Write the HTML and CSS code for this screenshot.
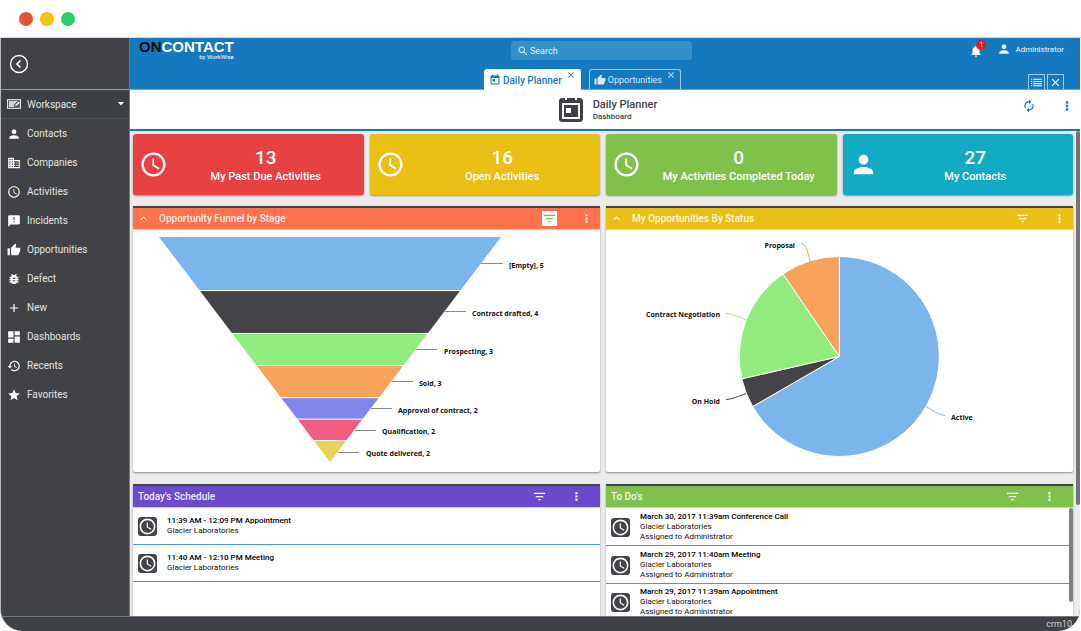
FILE: index.html
```html
<!DOCTYPE html>
<html lang="en">
<head>
<meta charset="utf-8">
<title>OnContact CRM - Daily Planner</title>
<link rel="stylesheet" href="styles.css">
</head>
<body>
<svg class="sprite" aria-hidden="true">
  <symbol id="person" viewBox="0 0 24 24"><path d="M12 12c2.210 0 4-1.790 4-4s-1.790-4-4-4-4 1.790-4 4 1.790 4 4 4zm0 2c-2.670 0-8 1.340-8 4v2h16v-2c0-2.660-5.330-4-8-4z"/></symbol>
  <symbol id="clock" viewBox="0 0 24 24"><path d="M11.990 2C6.470 2 2 6.480 2 12s4.470 10 9.990 10C17.520 22 22 17.520 22 12S17.520 2 11.990 2zM12 20c-4.420 0-8-3.580-8-8s3.580-8 8-8 8 3.580 8 8-3.580 8-8 8zm.5-13H11v6l5.250 3.150.75-1.230-4.500-2.670z"/></symbol>
  <symbol id="thumb" viewBox="0 0 24 24"><path d="M1 21h4V9H1v12zm22-11c0-1.100-.9-2-2-2h-6.310l.95-4.570.03-.32c0-.41-.17-.79-.44-1.060L14.170 1 7.590 7.590C7.220 7.950 7 8.450 7 9v10c0 1.100.9 2 2 2h9c.83 0 1.540-.5 1.840-1.220l3.020-7.050c.09-.23.14-.47.14-.73v-2z"/></symbol>
  <symbol id="event" viewBox="0 0 24 24"><path fill-rule="evenodd" d="M19 3h-1V1h-2v2H8V1H6v2H5c-1.100 0-2 .9-2 2v14c0 1.100.9 2 2 2h14c1.100 0 2-.9 2-2V5c0-1.100-.9-2-2-2zm0 16H5V8h14v11zM7 10h5v5H7z"/></symbol>
  <symbol id="filter" viewBox="0 0 24 24"><path d="M10 18h4v-2h-4v2zM3 6v2h18V6H3zm3 7h12v-2H6v2z"/></symbol>
  <symbol id="more" viewBox="0 0 24 24"><path d="M10 4h4v4h-4zM10 10h4v4h-4zM10 16h4v4h-4z"/></symbol>
  <symbol id="up" viewBox="0 0 24 24"><path d="M12 8l-6 6 1.410 1.410L12 10.830l4.590 4.580L18 14z"/></symbol>
  <symbol id="close" viewBox="0 0 24 24"><path d="M19 6.410L17.590 5 12 10.590 6.410 5 5 6.410 10.590 12 5 17.590 6.410 19 12 13.410 17.590 19 19 17.590 13.410 12z"/></symbol>
</svg>

<div class="titlebar"><span class="dot dot-red"></span><span class="dot dot-yellow"></span><span class="dot dot-green"></span></div>

<div class="app">
  <div class="shell">
    <nav class="sidebar" aria-label="Main">
      <div class="sidebar-top">
        <button class="back" aria-label="Collapse menu"><svg viewBox="0 0 20 20"><circle cx="10" cy="10" r="8.500" fill="none" stroke="#fff" stroke-width="1.400"/><path d="M11.500 6.500L8 10l3.500 3.500" fill="none" stroke="#fff" stroke-width="1.600"/></svg></button>
      </div>
      <button class="nav-item workspace">
        <svg class="icon" viewBox="0 0 24 24"><path fill-rule="evenodd" d="M0 4h24v16H0zM1.500 5.500v13h21v-13z"/><path fill="#d2d2d2" d="M3 7h18v10H3z"/><path fill="#45474b" d="M12 17l1-5 6-5h2v10z"/><path d="M14 16l1-3 5-5 2 2-5 5z"/></svg>
        <span>Workspace</span>
        <svg class="caret" viewBox="0 0 8 4"><path d="M1 0h6L4 3.500z"/></svg>
      </button>
      <a class="nav-item" href="#contacts"><svg class="icon"><use href="#person"/></svg><span>Contacts</span></a>
      <a class="nav-item" href="#companies"><svg class="icon" viewBox="0 0 24 24"><path d="M12 7V3H2v18h20V7H12zM6 19H4v-2h2v2zm0-4H4v-2h2v2zm0-4H4V9h2v2zm0-4H4V5h2v2zm4 12H8v-2h2v2zm0-4H8v-2h2v2zm0-4H8V9h2v2zm0-4H8V5h2v2zm10 12h-8v-2h2v-2h-2v-2h2v-2h-2V9h8v10zm-2-8h-2v2h2v-2zm0 4h-2v2h2v-2z"/></svg><span>Companies</span></a>
      <a class="nav-item" href="#activities"><svg class="icon"><use href="#clock"/></svg><span>Activities</span></a>
      <a class="nav-item" href="#incidents"><svg class="icon" viewBox="0 0 24 24"><path d="M20 2H4c-1.100 0-1.990.9-1.990 2L2 22l4-4h14c1.100 0 2-.9 2-2V4c0-1.100-.9-2-2-2zm-7 12h-2v-2h2v2zm0-4h-2V5h2v5z"/></svg><span>Incidents</span></a>
      <a class="nav-item" href="#opportunities"><svg class="icon"><use href="#thumb"/></svg><span>Opportunities</span></a>
      <a class="nav-item" href="#defect"><svg class="icon" viewBox="0 0 24 24"><path d="M20 8h-2.810c-.45-.78-1.070-1.450-1.820-1.960L17 4.410 15.590 3l-2.170 2.170C12.960 5.060 12.490 5 12 5s-.96.060-1.410.17L8.410 3 7 4.410l1.620 1.630C7.880 6.550 7.260 7.220 6.810 8H4v2h2.090c-.05.33-.09.66-.09 1v1H4v2h2v1c0 .34.04.67.09 1H4v2h2.810c1.040 1.790 2.970 3 5.190 3s4.150-1.210 5.190-3H20v-2h-2.090c.05-.33.09-.66.09-1v-1h2v-2h-2v-1c0-.34-.04-.67-.09-1H20V8zm-6 8h-4v-2h4v2zm0-4h-4v-2h4v2z"/></svg><span>Defect</span></a>
      <a class="nav-item" href="#new"><svg class="icon" viewBox="0 0 24 24"><path d="M19 13h-6v6h-2v-6H5v-2h6V5h2v6h6v2z"/></svg><span>New</span></a>
      <a class="nav-item" href="#dashboards"><svg class="icon" viewBox="0 0 24 24"><path d="M2 13h9V2H2v11zm0 9h9v-7H2v7zm11 0h9V11h-9v11zm0-20v7h9V2h-9z"/></svg><span>Dashboards</span></a>
      <a class="nav-item" href="#recents"><svg class="icon" viewBox="0 0 24 24"><path d="M13 3c-4.970 0-9 4.030-9 9H1l3.890 3.890.07.14L9 12H6c0-3.870 3.130-7 7-7s7 3.130 7 7-3.130 7-7 7c-1.930 0-3.680-.79-4.940-2.060l-1.420 1.420C8.270 19.990 10.510 21 13 21c4.970 0 9-4.030 9-9s-4.030-9-9-9zm-1 5v5l4.280 2.540.72-1.210-3.500-2.080V8H12z"/></svg><span>Recents</span></a>
      <a class="nav-item" href="#favorites"><svg class="icon" viewBox="0 0 24 24"><path d="M12 17.270L18.180 21l-1.640-7.030L22 9.240l-7.190-.61L12 2 9.190 8.630 2 9.240l5.460 4.730L5.820 21z"/></svg><span>Favorites</span></a>
    </nav>

    <div class="main">
      <header class="header">
        <div class="logo"><div class="logo-name"><span class="logo-on">ON</span>CONTACT</div><div class="logo-by">by WorkWise</div></div>
        <label class="search"><svg viewBox="0 0 24 24"><path d="M15.500 14h-.79l-.28-.27C15.410 12.590 16 11.110 16 9.500 16 5.910 13.090 3 9.500 3S3 5.910 3 9.500 5.910 16 9.500 16c1.610 0 3.090-.59 4.230-1.570l.27.28v.79l5 4.990L20.490 19l-4.990-5zm-6 0C7.010 14 5 11.990 5 9.500S7.010 5 9.500 5 14 7.010 14 9.500 11.990 14 9.500 14z"/></svg><input type="text" placeholder="Search" aria-label="Search"></label>
        <div class="user">
          <button class="bell" aria-label="Notifications"><svg viewBox="0 0 24 24"><path d="M12 22c1.100 0 2-.9 2-2h-4c0 1.100.9 2 2 2zm6-6v-5c0-3.070-1.640-5.640-4.500-6.320V4c0-.83-.67-1.500-1.500-1.500s-1.500.67-1.500 1.500v.68C7.630 5.360 6 7.920 6 11v5l-2 2v1h16v-1l-2-2z"/></svg><span class="badge">1</span></button>
          <button class="account"><svg><use href="#person"/></svg>Administrator</button>
        </div>
        <div class="tabs">
          <div class="tab tab-active"><svg class="tab-icon"><use href="#event"/></svg><a href="#planner">Daily Planner</a><button class="tab-close" aria-label="Close Daily Planner"><svg><use href="#close"/></svg></button></div>
          <div class="tab"><svg class="tab-icon"><use href="#thumb"/></svg><a href="#opps">Opportunities</a><button class="tab-close" aria-label="Close Opportunities"><svg><use href="#close"/></svg></button></div>
        </div>
        <div class="tab-tools">
          <button aria-label="List tabs"><svg viewBox="0 0 24 24"><path d="M2 5h2v2H2zM6 5h16v2H6zM2 9h2v2H2zM6 9h16v2H6zM2 13h2v2H2zM6 13h16v2H6zM2 17h2v2H2zM6 17h16v2H6z"/></svg></button>
          <button aria-label="Close all tabs"><svg><use href="#close"/></svg></button>
        </div>
      </header>

      <div class="pagebar">
        <div class="page-title">
          <svg viewBox="0 0 26 26"><path fill-rule="evenodd" d="M5 1h2v2h2V1h8v2h2V1h2c3 0 4 1 4 4v16c0 3-1 4-4 4H5c-3 0-4-1-4-4V5c0-3 1-4 4-4zM4 6v15c0 1 0 1 1 1h16c1 0 1 0 1-1V6zM6 8h14v12H6zM8 11v5h5v-5z"/></svg>
          <div><h1>Daily Planner</h1><p>Dashboard</p></div>
        </div>
        <div class="page-tools">
          <button aria-label="Refresh"><svg viewBox="0 0 24 24"><path d="M12 6v3l4-4-4-4v3c-4.420 0-8 3.580-8 8 0 1.570.46 3.030 1.240 4.260L6.700 14.800c-.45-.83-.7-1.790-.7-2.800 0-3.310 2.690-6 6-6zm6.760 1.740L17.300 9.200c.44.840.7 1.790.7 2.800 0 3.310-2.690 6-6 6v-3l-4 4 4 4v-3c4.420 0 8-3.580 8-8 0-1.570-.46-3.030-1.240-4.260z"/></svg></button>
          <button aria-label="More"><svg><use href="#more"/></svg></button>
        </div>
      </div>

      <main class="content">
        <div class="cards">
          <button class="card card-red"><svg><use href="#clock"/></svg><span class="card-text"><b>13</b>My Past Due Activities</span></button>
          <button class="card card-yellow"><svg><use href="#clock"/></svg><span class="card-text"><b>16</b>Open Activities</span></button>
          <button class="card card-green"><svg><use href="#clock"/></svg><span class="card-text"><b>0</b>My Activities Completed Today</span></button>
          <button class="card card-teal"><svg><use href="#person"/></svg><span class="card-text"><b>27</b>My Contacts</span></button>
        </div>

        <div class="panels">
          <section class="panel">
            <div class="panel-head head-orange">
              <button aria-label="Collapse"><svg><use href="#up"/></svg></button><h2>Opportunity Funnel by Stage</h2>
              <button class="filter filter-on" aria-label="Filter"><svg><use href="#filter"/></svg></button><button aria-label="More"><svg><use href="#more"/></svg></button>
            </div>
            <svg class="chart" viewBox="0 0 467 242" role="img" aria-label="Opportunity funnel by stage">
              <path fill="#7cb5ec" d="M26 7H368L327.300 60.600H66.700z"/>
              <path fill="#434348" d="M66.700 60.600H327.300L294.700 103.400H99.300z"/>
              <path fill="#90ed7d" d="M99.300 103.400H294.700L270.300 135.600H123.700z"/>
              <path fill="#f7a35c" d="M123.700 135.600H270.300L245.900 167.700H148.100z"/>
              <path fill="#8085e9" d="M148.100 167.700H245.900L229.600 189.100H164.400z"/>
              <path fill="#f15c80" d="M164.400 189.100H229.600L213.300 210.600H180.700z"/>
              <path fill="#e4d354" d="M180.700 210.600H213.300L197 232z"/>
              <path fill="none" stroke="#fff" stroke-width="1" d="M66 60.600H328M99 103.400H295M123 135.600H271M148 167.700H246M164 189.100H230M180 210.600H214"/>
              <path class="leader" d="M348 33.500h22M312 81.500h21M283 119.500h21M259 151.500h21M238 178.500h21M222 200.500h21M205 222.500h21"/>
              <text x="376" y="38">[Empty], 5</text>
              <text x="339" y="86">Contract drafted, 4</text>
              <text x="311" y="124">Prospecting, 3</text>
              <text x="286" y="156">Sold, 3</text>
              <text x="265" y="183">Approval of contract, 2</text>
              <text x="249" y="204">Qualification, 2</text>
              <text x="233" y="226">Quote delivered, 2</text>
            </svg>
          </section>

          <section class="panel">
            <div class="panel-head head-yellow">
              <button aria-label="Collapse"><svg><use href="#up"/></svg></button><h2>My Opportunities By Status</h2>
              <button class="filter" aria-label="Filter"><svg><use href="#filter"/></svg></button><button aria-label="More"><svg><use href="#more"/></svg></button>
            </div>
            <svg class="chart" viewBox="0 0 467 242" role="img" aria-label="Opportunities by status">
              <g stroke="#fff" stroke-width="1" stroke-linejoin="round">
                <path fill="#7cb5ec" d="M233.300 126.500V26.500A100 100 0 1 1 146.700 176.500z"/>
                <path fill="#434348" d="M233.300 126.500L146.700 176.500A100 100 0 0 1 135.800 148.800z"/>
                <path fill="#90ed7d" d="M233.300 126.500L135.800 148.800A100 100 0 0 1 177 43.900z"/>
                <path fill="#f7a35c" d="M233.300 126.500L177 43.900A100 100 0 0 1 233.300 26.500z"/>
              </g>
              <g fill="none" stroke-width="1">
                <path stroke="#7cb5ec" d="M339 185.500C334 185.500 326 180 320 176.500"/>
                <path stroke="#434348" d="M120 169.500C125 169.500 134 166 140 163.500"/>
                <path stroke="#90ed7d" d="M120 83.500C125 83.500 134 87 140.500 90"/>
                <path stroke="#f7a35c" d="M195 13.500C200 13.500 201 20 204 30.500"/>
              </g>
              <text x="345" y="190">Active</text>
              <text x="114" y="174" text-anchor="end">On Hold</text>
              <text x="114" y="87" text-anchor="end">Contract Negotiation</text>
              <text x="189" y="18" text-anchor="end">Proposal</text>
            </svg>
          </section>

          <section class="panel">
            <div class="panel-head head-purple">
              <h2>Today's Schedule</h2>
              <button class="filter" aria-label="Filter"><svg><use href="#filter"/></svg></button><button aria-label="More"><svg><use href="#more"/></svg></button>
            </div>
            <ul class="list schedule">
              <li><span class="tile"><svg><use href="#clock"/></svg></span><div><strong>11:39 AM - 12:09 PM Appointment</strong><p>Glacier Laboratories</p></div></li>
              <li><span class="tile"><svg><use href="#clock"/></svg></span><div><strong>11:40 AM - 12:10 PM Meeting</strong><p>Glacier Laboratories</p></div></li>
            </ul>
          </section>

          <section class="panel">
            <div class="panel-head head-green">
              <h2>To Do's</h2>
              <button class="filter" aria-label="Filter"><svg><use href="#filter"/></svg></button><button aria-label="More"><svg><use href="#more"/></svg></button>
            </div>
            <div class="todo-body">
              <ul class="list todo">
                <li><span class="tile"><svg><use href="#clock"/></svg></span><div><strong>March 30, 2017 11:39am Conference Call</strong><p>Glacier Laboratories</p><p>Assigned to Administrator</p></div></li>
                <li><span class="tile"><svg><use href="#clock"/></svg></span><div><strong>March 29, 2017 11:40am Meeting</strong><p>Glacier Laboratories</p><p>Assigned to Administrator</p></div></li>
                <li><span class="tile"><svg><use href="#clock"/></svg></span><div><strong>March 29, 2017 11:39am Appointment</strong><p>Glacier Laboratories</p><p>Assigned to Administrator</p></div></li>
              </ul>
              <span class="thumb thumb-list"></span>
            </div>
          </section>
        </div>
        <span class="thumb thumb-page"></span>
      </main>
    </div>
  </div>
  <footer class="footer">crm10</footer>
</div>
</body>
</html>
```
FILE: styles.css
```css
* { box-sizing: border-box; }
body {
  margin: 0;
  height: 100vh;
  display: flex;
  flex-direction: column;
  overflow: hidden;
  background: #fff;
  font-family: Roboto, "Liberation Sans", sans-serif;
  font-size: 9px;
}
h1, h2, p, ul { margin: 0; padding: 0; }
button { margin: 0; padding: 0; border: 0; background: none; color: inherit; font: inherit; cursor: pointer; }
a { color: inherit; text-decoration: none; }
svg { display: block; fill: currentColor; flex: none; }
.sprite { position: absolute; width: 0; height: 0; }

.titlebar { flex: none; height: 38px; display: flex; align-items: center; gap: 7px; padding-left: 19px; border-bottom: 1px solid #d5dce0; }
.dot { width: 14px; height: 14px; border-radius: 50%; }
.dot-red { background: #e94f3d; }
.dot-yellow { background: #f1c40f; }
.dot-green { background: #2ecc71; }

.app { flex: 1; min-height: 0; display: flex; flex-direction: column; margin-right: 1px; border-left: 1px solid #b5b7b9; border-radius: 0 0 22px 22px; overflow: hidden; background: #3e4145; }
.shell { flex: 1; min-height: 0; display: grid; grid-template-columns: 129px minmax(0, 1fr); }

.sidebar { background: #404246; color: #e4e4e4; border-right: 1px solid #77797c; font-size: 10px; }
.sidebar-top { height: 52px; display: flex; align-items: center; padding-left: 8px; border-bottom: 1px solid #9b9da0; }
.back svg { width: 20px; height: 20px; }
.nav-item { display: flex; align-items: center; width: 100%; height: 29px; padding-left: 6px; gap: 6px; text-align: left; }
.nav-item .icon { width: 14px; height: 14px; color: #fff; }
.workspace { background: #3c4045; border-bottom: 1px solid #515359; }
.caret { width: 8px; height: 4px; margin-left: auto; margin-right: 4px; color: #fff; }

.main { display: flex; flex-direction: column; min-width: 0; min-height: 0; }
.header { flex: none; height: 52px; display: grid; grid-template-columns: 1fr 181px 1fr; grid-template-rows: 22px 29px; padding: 0 16px 0 9px; background: #1579c0; color: #fff; border-bottom: 1px solid #6da9d6; }
.logo { justify-self: start; padding-top: 2px; }
.logo-name { font: 700 15px/14px "Liberation Sans", sans-serif; }
.logo-on { color: #000; }
.logo-by { font-size: 6px; line-height: 5px; text-align: right; }
.search { align-self: end; height: 19px; display: flex; align-items: center; gap: 1px; padding-left: 5px; border: 1px solid #4c88b1; border-radius: 3px; background: #3490cb; color: #e0effa; }
.search svg { width: 12px; height: 12px; }
.search input { flex: 1; min-width: 0; padding: 0; border: 0; outline: 0; background: none; color: inherit; font: inherit; }
.search input::placeholder { color: inherit; opacity: 1; }
.user { justify-self: end; display: flex; align-items: center; gap: 14px; }
.bell { position: relative; padding-top: 3px; }
.bell svg { width: 14px; height: 14px; }
.badge { position: absolute; left: 7px; top: -1px; width: 10px; height: 10px; border-radius: 50%; background: #e21b1b; font-size: 7px; line-height: 10px; text-align: center; }
.account { display: flex; align-items: center; gap: 4px; color: #f0f6fb; font-size: 8px; }
.account svg { width: 14px; height: 14px; }
.tabs { grid-column: 1 / 4; grid-row: 2; justify-self: center; align-self: end; display: flex; gap: 8px; margin-right: 38px; }
.tab { display: flex; align-items: center; height: 20px; padding: 0 4px; gap: 2px; border: 1px solid #9ccbec; border-bottom: 0; border-radius: 3px 3px 0 0; color: #d8eaf7; }
.tab-active { height: 21px; margin-bottom: -1px; background: #fff; border-color: #fff; color: #1579c0; font-size: 10px; font-weight: 500; }
.tab-icon { width: 12px; height: 12px; }
.tab a { margin-right: 2px; }
.tab-close { align-self: start; }
.tab-close svg { width: 10px; height: 10px; }
.tab-tools { grid-column: 3; grid-row: 2; justify-self: end; align-self: end; display: flex; gap: 2px; }
.tab-tools button { width: 17px; height: 15px; border: 1px solid #9ccbec; border-bottom: 0; display: grid; place-items: center; }
.tab-tools svg { width: 13px; height: 13px; }

.pagebar { flex: none; height: 41px; display: grid; grid-template-columns: 1fr auto 1fr; align-items: center; padding: 0 8px 0 13px; background: #fff; border-bottom: 2px solid #1579c0; }
.page-title { grid-column: 2; display: flex; align-items: center; gap: 9px; color: #404248; }
.page-title svg { width: 26px; height: 26px; }
.page-title h1 { font-size: 11px; line-height: 14px; font-weight: 500; }
.page-title p { font-size: 8px; line-height: 10px; font-weight: 500; }
.page-tools { justify-self: end; align-self: start; padding-top: 9px; display: flex; gap: 24px; color: #1579c0; }
.page-tools svg { width: 14px; height: 14px; }
.page-tools button:last-child { margin-right: -2px; }

.content { position: relative; flex: 1; min-height: 0; overflow: hidden; padding: 3px 7px 0 3px; background: #ebebeb; }
.cards { display: grid; grid-template-columns: repeat(4, minmax(0, 1fr)); gap: 6px; }
.card { display: flex; align-items: center; height: 61px; padding: 0 0 0 6px; border-radius: 3px; color: #fff; box-shadow: 0 1px 2px rgba(0, 0, 0, .4); }
.card svg { width: 29px; height: 29px; }
.card-text { flex: 1; padding-top: 1px; font-size: 11px; line-height: 15px; font-weight: 500; text-align: center; }
.card-text b { display: block; font-size: 19px; line-height: 22px; font-weight: 500; }
.card-red { background: #e84142; }
.card-yellow { background: #eac015; }
.card-green { background: #80c14b; }
.card-teal { background: #13abc4; }

.panels { display: grid; grid-template-columns: repeat(2, minmax(0, 1fr)); gap: 12px 6px; padding-top: 11px; }
.panel { background: #fff; border-radius: 0 0 2px 2px; box-shadow: 0 1px 2px rgba(0, 0, 0, .4); min-height: 136px; }
.panel-head { display: flex; align-items: center; height: 24px; padding: 0 7px 0 4px; border-top: 2px solid #454545; border-bottom: 1px solid #d5d0cc; color: #fff; }
.panel-head svg { width: 13px; height: 13px; }
.panel-head h2 { flex: 1; padding-left: 9px; font-size: 10px; line-height: 12px; font-weight: 500; color: rgba(255, 255, 255, .9); }
.panel-head h2:first-child { padding-left: 1px; }
.panel-head .filter { width: 15px; height: 15px; display: grid; place-items: center; margin-right: 23px; }
.panel-head .filter svg { width: 15px; height: 15px; }
.panel-head .filter-on { background: #fff; color: #80c14b; }
.head-orange { background: #ff734c; }
.head-yellow { background: #eac015; }
.head-purple { background: #6a4bcc; padding-right: 17px; }
.head-green { background: #80c14b; padding-right: 17px; }
.chart { width: 100%; height: auto; }
.chart text { font: 700 7px "Open Sans", "Noto Sans", sans-serif; fill: #111; }
.leader { fill: none; stroke: #888; stroke-width: 1; }

.list { list-style: none; color: #111; font-size: 8px; }
.list li { display: flex; align-items: center; gap: 10px; padding: 8px 5px; border-bottom: 1px solid #4a98cc; line-height: 10px; }
.list strong { display: block; font-weight: 500; color: #000; }
.tile { width: 19px; height: 19px; border-radius: 3px; background: #42444a; color: #fff; display: grid; place-items: center; }
.tile svg { width: 19px; height: 19px; }
.todo-body { position: relative; }
.todo li { padding: 4px 5px 3px; }
.todo li:last-child { padding-top: 3px; }

.thumb { position: absolute; border-radius: 2px; background: #7f8080; }
.thumb-list { top: 0; right: 0; width: 4px; height: 94px; }
.thumb-page { top: 0; right: 0; width: 4px; height: 374px; background: #747474; }

.footer { flex: none; height: 15px; padding-right: 8px; border-top: 1px solid #77797c; color: #d5d5d5; line-height: 15px; text-align: right; }
```
